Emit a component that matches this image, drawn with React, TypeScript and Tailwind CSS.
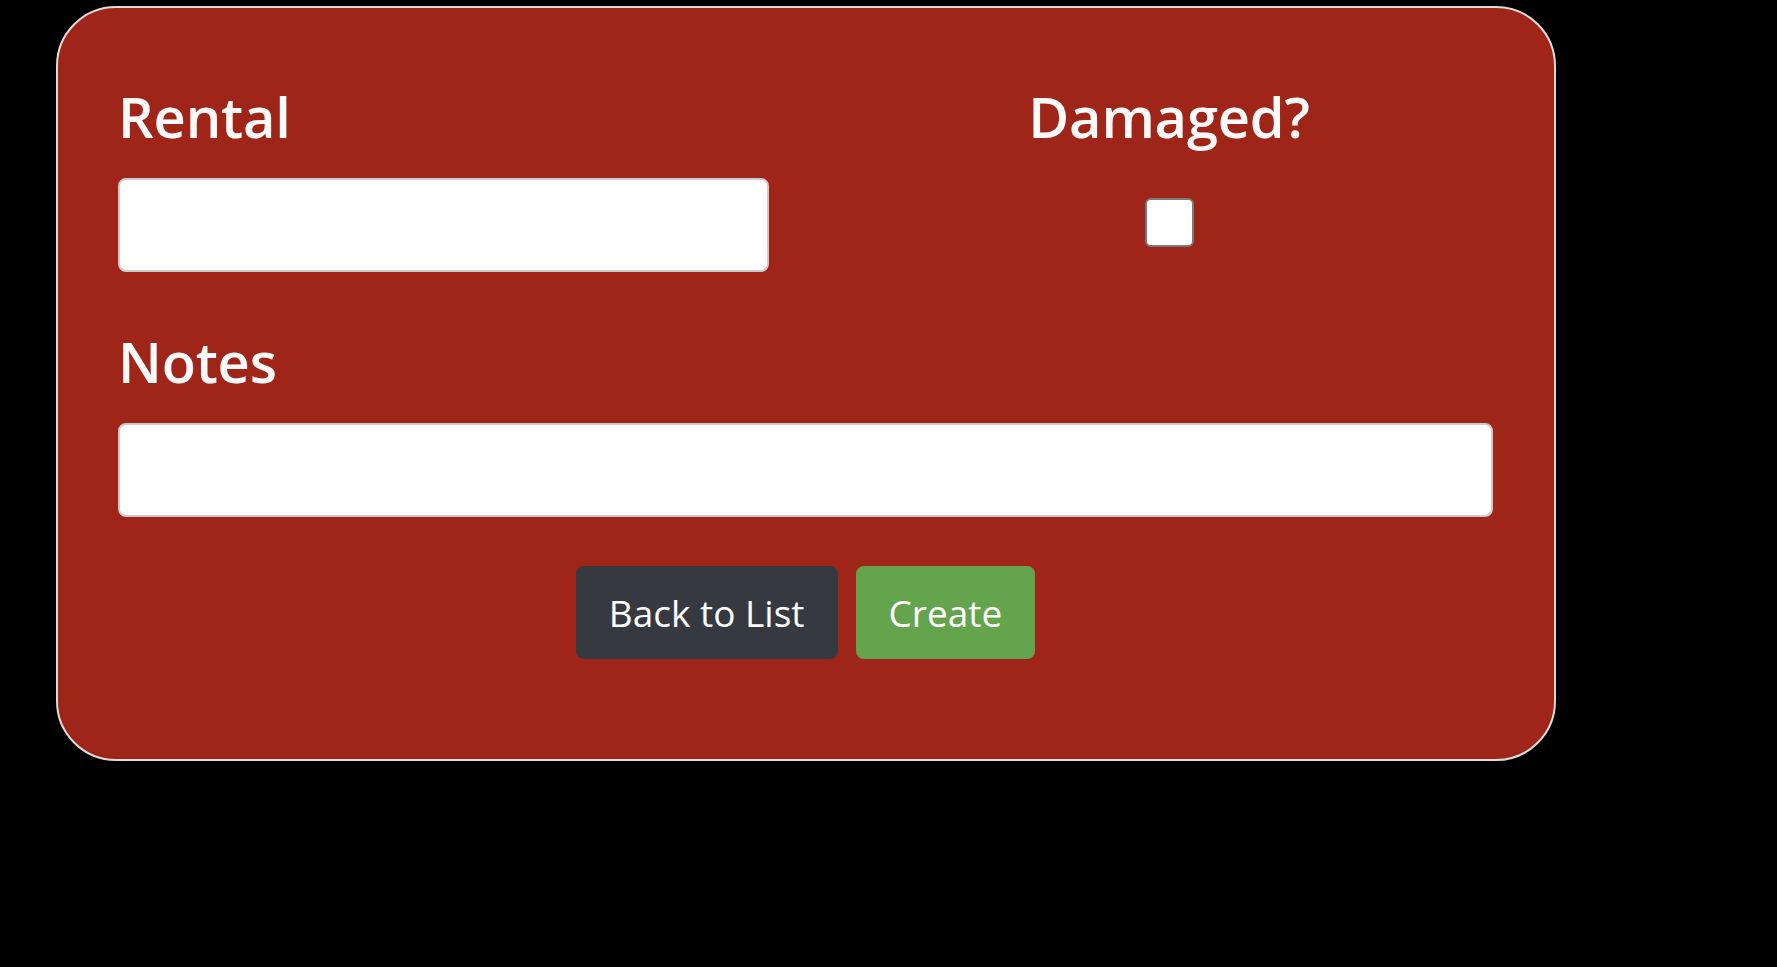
import { useState } from "react";

const labelClass =
  "block text-[56px] leading-none font-semibold text-[#fefafa] tracking-[-0.2px]";

const App = () => {
  const [rental, setRental] = useState("");
  const [notes, setNotes] = useState("");
  const [damaged, setDamaged] = useState(false);

  return (
    <div
      className="min-h-screen w-full bg-black pt-[6px] pl-[56px]"
      style={{ fontFamily: '"Open Sans", "Noto Sans", sans-serif' }}
    >
      {/* Create form card */}
      <form
        className="w-[1500px] rounded-[60px] border-2 border-[#dcdcdc] bg-[#9f2519] pl-[60px] pr-[61px] pt-[80px] pb-[100px]"
        onSubmit={(e) => e.preventDefault()}
      >
        <div className="grid grid-cols-[651px_1fr] gap-x-[76px]">
          <div>
            <label className={labelClass}>Rental</label>
            <input
              type="text"
              value={rental}
              onChange={(e) => setRental(e.target.value)}
              className="mt-[34px] block h-[94px] w-full rounded-[8px] border-2 border-[#cdc9d0] bg-white px-4 text-2xl outline-none"
            />
          </div>
          <div className="flex flex-col items-center">
            <label className={labelClass}>Damaged?</label>
            <input
              type="checkbox"
              checked={damaged}
              onChange={(e) => setDamaged(e.target.checked)}
              className="mt-[54px] block h-[49px] w-[49px] appearance-none rounded-[6px] border-2 border-[#7a7a7a] bg-white checked:bg-[#0d6efd]"
            />
          </div>
        </div>

        <div className="mt-[61px]">
          <label className={labelClass}>Notes</label>
          <input
            type="text"
            value={notes}
            onChange={(e) => setNotes(e.target.value)}
            className="mt-[34px] block h-[94px] w-full rounded-[8px] border-2 border-[#cdc9d0] bg-white px-4 text-2xl outline-none"
          />
        </div>

        <div className="mt-[49px] flex justify-center gap-[18px]">
          <button
            type="button"
            className="h-[93px] rounded-[8px] bg-[#363940] px-[33px] text-[37px] text-white"
          >
            Back to List
          </button>
          <button
            type="submit"
            className="h-[93px] rounded-[8px] bg-[#64a44c] px-[33px] text-[37px] text-white"
          >
            Create
          </button>
        </div>
      </form>
    </div>
  );
};

export default App;
